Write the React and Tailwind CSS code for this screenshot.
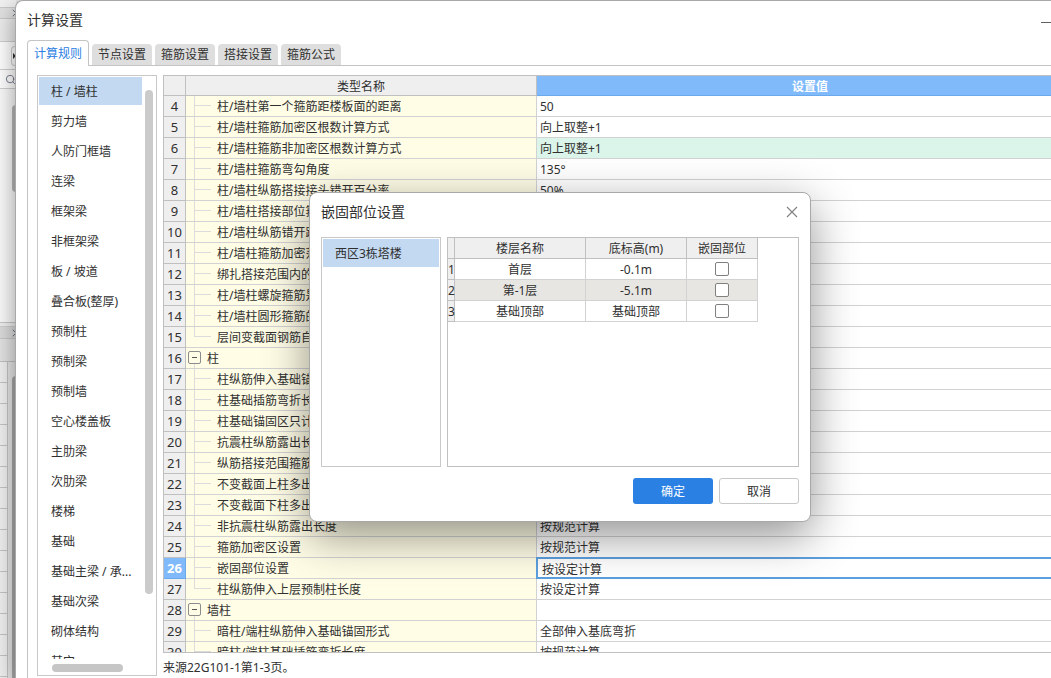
import { Search, X } from 'lucide-react'

const tabs = ['计算规则', '节点设置', '箍筋设置', '搭接设置', '箍筋公式']

const categories = [
  '柱 / 墙柱', '剪力墙', '人防门框墙', '连梁', '框架梁', '非框架梁', '板 / 坡道',
  '叠合板(整厚)', '预制柱', '预制梁', '预制墙', '空心楼盖板', '主肋梁', '次肋梁',
  '楼梯', '基础', '基础主梁 / 承...', '基础次梁', '砌体结构', '其它',
]

const rules = [
  { no: 4, name: '柱/墙柱第一个箍筋距楼板面的距离', value: '50' },
  { no: 5, name: '柱/墙柱箍筋加密区根数计算方式', value: '向上取整+1' },
  { no: 6, name: '柱/墙柱箍筋非加密区根数计算方式', value: '向上取整+1', changed: true },
  { no: 7, name: '柱/墙柱箍筋弯勾角度', value: '135°' },
  { no: 8, name: '柱/墙柱纵筋搭接接头错开百分率', value: '50%' },
  { no: 9, name: '柱/墙柱搭接部位箍筋加密', value: '' },
  { no: 10, name: '柱/墙柱纵筋错开距离', value: '' },
  { no: 11, name: '柱/墙柱箍筋加密范围', value: '' },
  { no: 12, name: '绑扎搭接范围内的箍筋', value: '' },
  { no: 13, name: '柱/墙柱螺旋箍筋是否', value: '' },
  { no: 14, name: '柱/墙柱圆形箍筋的', value: '' },
  { no: 15, name: '层间变截面钢筋自动', value: '', last: true },
  { no: 16, name: '柱', value: '', group: true },
  { no: 17, name: '柱纵筋伸入基础锚固', value: '' },
  { no: 18, name: '柱基础插筋弯折长度', value: '' },
  { no: 19, name: '柱基础锚固区只计算', value: '' },
  { no: 20, name: '抗震柱纵筋露出长度', value: '' },
  { no: 21, name: '纵筋搭接范围箍筋', value: '' },
  { no: 22, name: '不变截面上柱多出', value: '' },
  { no: 23, name: '不变截面下柱多出', value: '' },
  { no: 24, name: '非抗震柱纵筋露出长度', value: '按规范计算' },
  { no: 25, name: '箍筋加密区设置', value: '按规范计算' },
  { no: 26, name: '嵌固部位设置', value: '按设定计算', selected: true },
  { no: 27, name: '柱纵筋伸入上层预制柱长度', value: '按设定计算', last: true },
  { no: 28, name: '墙柱', value: '', group: true },
  { no: 29, name: '暗柱/端柱纵筋伸入基础锚固形式', value: '全部伸入基底弯折' },
  { no: 30, name: '暗柱/端柱基础插筋弯折长度', value: '按规范计算' },
]

const floors = [
  { name: '首层', height: '-0.1m' },
  { name: '第-1层', height: '-5.1m' },
  { name: '基础顶部', height: '基础顶部' },
]

function Backdrop() {
  return (
    <div className="flex w-4 shrink-0 flex-col overflow-hidden bg-white">
      <div className="h-2 shrink-0 border-b border-[#c8c8c8] bg-[#f0f0f0]" />
      <div className="flex h-[11px] shrink-0 items-center justify-end border-b border-[#c8c8c8] bg-[#e0e0e0]">
        <X className="-mr-1.5 size-3 shrink-0 text-gray-500" />
      </div>
      <div className="h-[23px] shrink-0 border-b border-[#d0d0d0] bg-[#ececec]" />
      <div className="flex h-7 shrink-0 items-center justify-end border-b border-[#d0d0d0]">
        <div className="flex h-5 w-[5px] items-center justify-end rounded-l border-y border-l border-[#d0d0d0]">
          <svg viewBox="0 0 3 6" className="h-1.5 w-[3px] shrink-0">
            <path d="M0 0l3 3-3 3z" fill="#333" />
          </svg>
        </div>
      </div>
      <div className="flex h-[19px] shrink-0 items-center justify-end border-b border-[#d0d0d0]">
        <Search className="size-[11px] text-gray-500" />
      </div>
      <div className="flex h-[234px] shrink-0 justify-end border-b border-[#c8c8c8] bg-[#fbfbfb] pt-4">
        <div className="h-[87px] w-1 rounded-l bg-[#b8b8b8]" />
      </div>
      <div className="h-1 shrink-0 border-b border-[#d0d0d0] bg-[#f0f0f0]" />
      <div className="flex h-3 shrink-0 items-center justify-end border-b border-[#c8c8c8] bg-[#dcdcdc]">
        <X className="-mr-1.5 size-3 shrink-0 text-gray-500" />
      </div>
      <div className="h-[23px] shrink-0 border-b border-[#c0c0c0] bg-[#e4e4e4]" />
      <div className="flex min-h-0 flex-1 bg-[#e6e6e6]">
        <div className="w-2 border-r border-[#c4c4c4] bg-[#f0f0f0]">
          {Array.from({ length: 16 }, (_, i) => (
            <div key={i} className="h-[21px] border-b border-[#c4c4c4]" />
          ))}
        </div>
        <div className="mt-[14px] ml-1 flex-1 rounded-tl bg-[#a8a8a8]" />
      </div>
    </div>
  )
}

function Sidebar() {
  return (
    <nav className="flex w-[120px] shrink-0 flex-col border border-[#c8c8c8] p-px">
      <div className="flex min-h-0 flex-1 justify-between overflow-hidden pr-0.5">
        <ul className="flex w-[103px] flex-col gap-0.5">
          {categories.map((c, i) => (
            <li key={c}>
              <button
                className={`flex h-7 w-full items-center pt-0.5 pl-3 whitespace-nowrap ${i === 0 ? 'bg-[#c2d9f1]' : ''}`}
              >
                {c}
              </button>
            </li>
          ))}
        </ul>
        <div className="mt-[13px] h-[504px] w-2 rounded-full bg-[#cbcbcb]" />
      </div>
      <div className="flex h-[15px] shrink-0 items-center pt-0.5 pl-[13px]">
        <div className="h-2 w-[71px] rounded-full bg-[#c6c6c6]" />
      </div>
    </nav>
  )
}

function NameCell({ rule }) {
  if (rule.group) {
    return (
      <div className="flex h-5 items-center gap-1.5 pl-0.5">
        <div className="flex h-full flex-col items-center">
          <button
            aria-label="折叠"
            className="mt-[3px] flex size-[13px] shrink-0 items-center justify-center rounded-xs border border-[#8c8c8c]"
          >
            <span className="h-px w-[5px] bg-[#555]" />
          </button>
          <span className="w-px flex-1 bg-[#dcdcdc]" />
        </div>
        <span className="pt-0.5">{rule.name}</span>
      </div>
    )
  }
  return (
    <div className="flex h-5 items-center gap-1.5 pl-2">
      <div className="flex h-full w-[17px] flex-col">
        <span className="h-2.5 border-b border-l border-[#dcdcdc]" />
        {!rule.last && <span className="flex-1 border-l border-[#dcdcdc]" />}
      </div>
      <span className="pt-0.5">{rule.name}</span>
    </div>
  )
}

function RuleTable() {
  return (
    <div className="min-h-0 flex-1 overflow-hidden border border-[#c0c0c0]">
      <table className="w-full table-fixed border-separate border-spacing-0 whitespace-nowrap">
        <colgroup>
          <col className="w-[22px]" />
          <col className="w-[351px]" />
          <col />
        </colgroup>
        <thead>
          <tr className="h-5">
            <th className="border-r border-b border-[#c0c0c0] bg-[#efefef] p-0" />
            <th className="border-r border-b border-[#c0c0c0] bg-[#efefef] p-0 pt-0.5 font-normal">类型名称</th>
            <th className="border-b border-[#6aa9ec] bg-[#80bafb] p-0 pt-0.5 font-bold text-white">设置值</th>
          </tr>
        </thead>
        <tbody>
          {rules.map((r) => (
            <tr key={r.no} className="h-[21px]">
              <td
                className={`border-r border-b p-0 text-center text-[13px] leading-5 ${
                  r.selected
                    ? 'border-[#6aa9ec] bg-[#80bafb] font-bold text-white'
                    : 'border-[#c0c0c0] bg-[#efefef]'
                }`}
              >
                {r.no}
              </td>
              <td className="overflow-hidden border-r border-b border-[#d2d2d2] bg-[#fffde6] p-0">
                <NameCell rule={r} />
              </td>
              <td className={`border-b border-[#d2d2d2] p-0 ${r.changed ? 'bg-[#dcf5ea]' : ''}`}>
                {r.selected ? (
                  <input
                    aria-label={r.name}
                    defaultValue={r.value}
                    className="block h-5 w-full border border-[#5c9fde] px-1 pt-px outline outline-[#5c9fde]"
                  />
                ) : (
                  <div className="flex h-5 items-center pt-0.5 pl-[3px]">{r.value}</div>
                )}
              </td>
            </tr>
          ))}
        </tbody>
      </table>
    </div>
  )
}

function AnchorDialog() {
  return (
    <div
      role="dialog"
      aria-label="嵌固部位设置"
      className="absolute top-[192px] left-[309px] w-[502px] rounded-lg border border-[#a8a8a8] bg-white px-[11px] pb-[17px] shadow-[0_14px_46px_rgba(0,0,0,0.43)]"
    >
      <div className="flex h-[38px] items-center justify-between">
        <h2 className="text-sm">嵌固部位设置</h2>
        <button aria-label="关闭">
          <svg viewBox="0 0 14 14" className="size-3.5" stroke="#808080" strokeWidth="1.1">
            <path d="M2 2l10 10M12 2L2 12" />
          </svg>
        </button>
      </div>
      <div className="mt-1.5 flex h-[230px] gap-1.5">
        <div className="w-[120px] border border-[#c8c8c8] p-px">
          <button className="flex h-7 w-full items-center bg-[#c2d9f1] pt-0.5 pl-3">西区3栋塔楼</button>
        </div>
        <div className="flex-1 border border-[#c0c0c0]">
          <table className="table-fixed border-separate border-spacing-0 text-center whitespace-nowrap">
            <colgroup>
              <col className="w-[7px]" />
              <col className="w-[131px]" />
              <col className="w-[101px]" />
              <col className="w-[71px]" />
            </colgroup>
            <thead>
              <tr className="h-[21px] bg-[#efefef]">
                <th className="border-r border-b border-[#c0c0c0] p-0" />
                <th className="border-r border-b border-[#c0c0c0] p-0 pt-0.5 font-normal">楼层名称</th>
                <th className="border-r border-b border-[#c0c0c0] p-0 pt-0.5 font-normal">底标高(m)</th>
                <th className="border-r border-b border-[#c0c0c0] p-0 pt-0.5 font-normal">嵌固部位</th>
              </tr>
            </thead>
            <tbody>
              {floors.map((f, i) => (
                <tr key={f.name} className={`h-[21px] ${i === 1 ? 'bg-[#e8e6e2]' : ''}`}>
                  <td className="border-r border-b border-[#c0c0c0] bg-[#efefef] p-0 pt-0.5">
                    <div className="w-1.5">{i + 1}</div>
                  </td>
                  <td className="border-r border-b border-[#d2d2d2] p-0 pt-0.5">{f.name}</td>
                  <td className="border-r border-b border-[#d2d2d2] p-0 pt-0.5">{f.height}</td>
                  <td className="border-r border-b border-[#d2d2d2] p-0">
                    <input
                      type="checkbox"
                      aria-label={`${f.name} 嵌固部位`}
                      className="mx-auto block size-3.5 appearance-none rounded-xs border border-[#808080] bg-white"
                    />
                  </td>
                </tr>
              ))}
            </tbody>
          </table>
        </div>
      </div>
      <div className="mt-[11px] flex justify-end gap-1.5">
        <button className="h-[26px] w-20 rounded-[3px] bg-[#2b80e3] pt-0.5 text-white">确定</button>
        <button className="h-[26px] w-20 rounded-[3px] border border-[#c8c8c8] bg-white pt-0.5">取消</button>
      </div>
    </div>
  )
}

export default function App() {
  return (
    <div className="relative flex h-screen overflow-hidden bg-[#e4e4e4] font-['Noto_Sans','Noto_Sans_CJK_SC',sans-serif] text-xs text-[#303030]">
      <Backdrop />
      <main className="-mr-[44px] -ml-px flex min-w-0 flex-1 flex-col rounded-tl-lg border-t border-l border-[#a8a8a8] bg-white pl-[11px] shadow-[0_8px_24px_rgba(0,0,0,0.4)]">
        <div className="flex h-[39px] shrink-0 items-center justify-between pr-[44px]">
          <h1 className="pb-0.5 text-sm">计算设置</h1>
          <button aria-label="最小化" className="flex h-6 w-2.5 items-center pt-1">
            <span className="h-px w-full bg-[#606060]" />
          </button>
        </div>
        <div role="tablist" className="flex shrink-0 items-end">
          {tabs.map((t, i) =>
            i === 0 ? (
              <button
                key={t}
                role="tab"
                aria-selected="true"
                className="h-[26px] w-[62px] rounded-t border-x border-t border-[#c4c4c4] text-[#2b80e3]"
              >
                {t}
              </button>
            ) : (
              <div key={t} className="flex h-[26px] items-end border-b border-[#c4c4c4] pl-[3px]">
                <button role="tab" aria-selected="false" className="h-[21px] w-[60px] rounded-t bg-[#dedede]">
                  {t}
                </button>
              </div>
            )
          )}
          <div className="h-[26px] flex-1 border-b border-[#c4c4c4]" />
        </div>
        <div className="flex min-h-0 flex-1 gap-1.5 border-l border-[#c4c4c4] pt-[9px] pr-[11px] pb-0.5 pl-[9px]">
          <Sidebar />
          <section className="flex min-w-0 flex-1 flex-col">
            <RuleTable />
            <p className="h-[23px] shrink-0 pt-[7px] leading-4">来源22G101-1第1-3页。</p>
          </section>
        </div>
      </main>
      <AnchorDialog />
    </div>
  )
}
